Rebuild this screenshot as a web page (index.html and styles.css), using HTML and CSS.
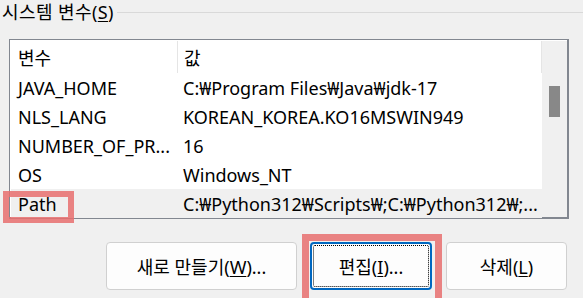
FILE: index.html
```html
<!DOCTYPE html>
<html lang="ko">
<head>
    <meta charset="UTF-8">
    <title>시스템 변수</title>
    <link rel="stylesheet" href="styles.css">
</head>
<body>

    <!-- System variables group -->
    <div class="group-title">
        <span class="group-label">시스템 변수(<u>S</u>)</span>
        <span class="group-line"></span>
    </div>

    <div class="var-list">
        <div class="list-body">
            <div class="list-header">
                <div class="col-name">변수</div>
                <div class="col-value">값</div>
            </div>
            <div class="list-row">
                <div class="col-name">JAVA_HOME</div>
                <div class="col-value">C:₩Program Files₩Java₩jdk-17</div>
            </div>
            <div class="list-row">
                <div class="col-name">NLS_LANG</div>
                <div class="col-value">KOREAN_KOREA.KO16MSWIN949</div>
            </div>
            <div class="list-row">
                <div class="col-name">NUMBER_OF_PR...</div>
                <div class="col-value">16</div>
            </div>
            <div class="list-row">
                <div class="col-name">OS</div>
                <div class="col-value">Windows_NT</div>
            </div>
            <div class="list-row selected">
                <div class="col-name">Path<span class="mark mark-path"></span></div>
                <div class="col-value">C:₩Python312₩Scripts₩;C:₩Python312₩;...</div>
            </div>
        </div>
        <div class="scrollbar">
            <div class="thumb"></div>
        </div>
    </div>

    <div class="actions">
        <button class="btn btn-new">새로 만들기(<u>W</u>)...</button>
        <button class="btn btn-edit focused">편집(<u>I</u>)...<span class="mark mark-btn"></span></button>
        <button class="btn btn-delete">삭제(<u>L</u>)</button>
    </div>

</body>
</html>
```

FILE: styles.css
```css
/* General Styling */
body {
    font-family: 'Noto Sans', 'Noto Sans CJK KR', sans-serif;
    font-size: 18px;
    background: #f0f0f0;
    color: #000000;
    margin: 0;
    padding: 0;
    width: 583px;
    height: 298px;
    overflow: hidden;
}

u {
    text-decoration-thickness: 1px;
    text-underline-offset: 2px;
}

/* Group title */
.group-title {
    display: flex;
    align-items: center;
    height: 24px;
    padding-left: 2px;
}

.group-label {
    line-height: 24px;
    white-space: nowrap;
    letter-spacing: 0.4px;
}

.group-line {
    flex: 1;
    margin-left: 3px;
    border-top: 1px solid #d9d9d9;
}

/* List view */
.var-list {
    display: flex;
    margin: 15px 0 0 9px;
    width: 557px;
    height: 177px;
    background: #ffffff;
    border: 1px solid #828790;
    border-right-width: 2px;
    border-bottom-width: 2px;
}

.list-body {
    flex: 1;
    padding: 1px 0 0 1px;
}

.list-header,
.list-row {
    display: flex;
    align-items: center;
    white-space: nowrap;
}

.list-header {
    height: 32px;
    border-right: 1px solid #e5e5e5;
}

.list-header .col-name {
    border-right: 1px solid #e5e5e5;
    align-self: stretch;
    display: flex;
    align-items: center;
}

.list-row {
    height: 29px;
}

.list-row.selected {
    background: #f0f0f0;
}

.col-name {
    position: relative;
    width: 159px;
    padding-left: 7px;
}

.col-value {
    padding-left: 6px;
    overflow: hidden;
}

/* Scrollbar */
.scrollbar {
    width: 25px;
    margin-top: 1px;
    background: #f0f0f0;
}

.thumb {
    width: 11px;
    height: 31px;
    margin: 45px 0 0 7px;
    background: #888888;
}

/* Buttons */
.actions {
    display: flex;
    gap: 13px;
    margin: 23px 0 0 106px;
}

.btn {
    position: relative;
    height: 48px;
    font-family: inherit;
    font-size: 18px;
    color: #000000;
    background: #fdfdfd;
    border: 1px solid #d0d0d0;
    border-radius: 4px;
    padding: 0;
}

.btn-new {
    width: 191px;
}

.btn-edit {
    width: 122px;
}

.btn-delete {
    width: 121px;
    margin-left: 1px;
}

.btn.focused {
    border: 2px solid #0067c0;
}

.btn.focused::before {
    content: "";
    position: absolute;
    inset: 1px;
    border: 1px dotted #000000;
    border-radius: 2px;
}

/* Red annotation boxes */
.mark {
    position: absolute;
    border: 6px solid rgba(232, 110, 110, 0.85);
    pointer-events: none;
}

.mark-path {
    left: -8px;
    top: -1px;
    width: 59px;
    height: 20px;
}

.mark-btn {
    left: -10px;
    top: -10px;
    right: -12px;
    bottom: -20px;
    border-width: 7px;
}
```
